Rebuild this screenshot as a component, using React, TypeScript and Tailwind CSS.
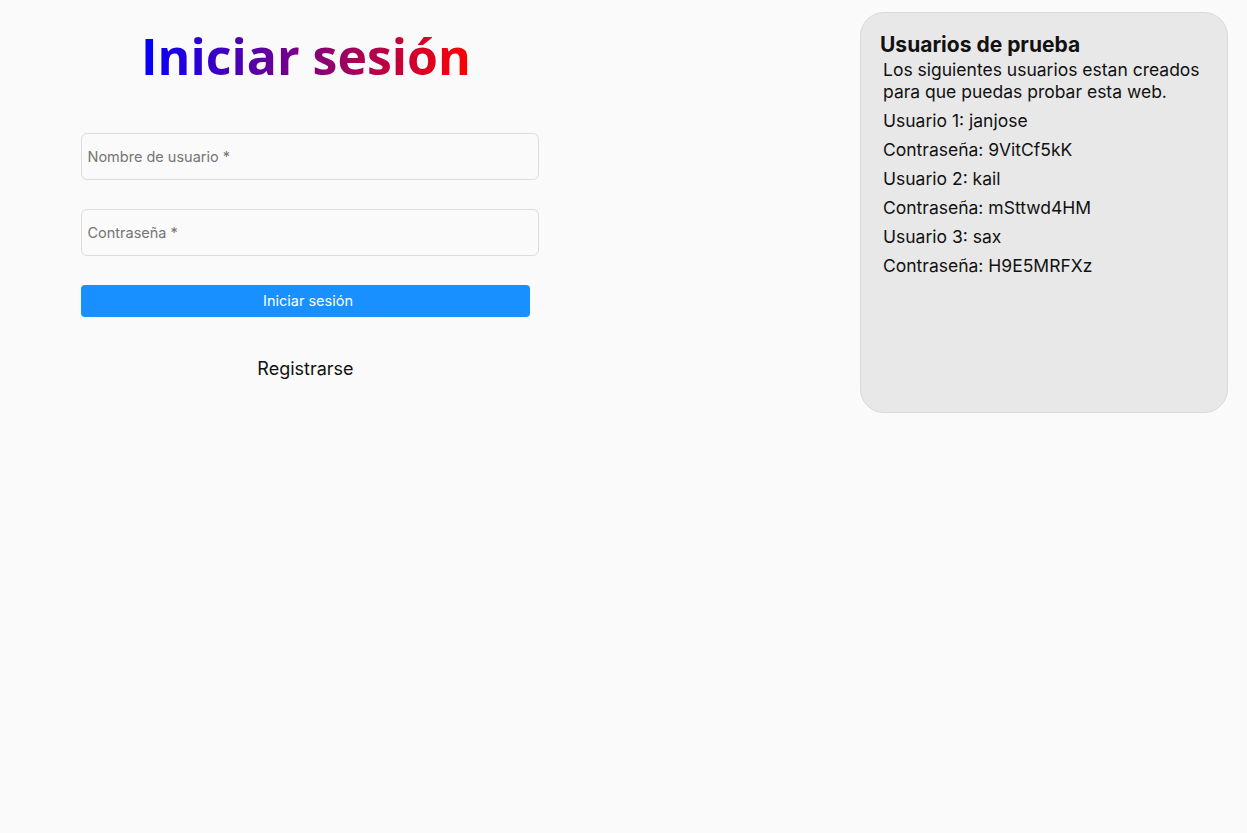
const users = [
  { user: 'janjose', pass: '9VitCf5kK' },
  { user: 'kail', pass: 'mSttwd4HM' },
  { user: 'sax', pass: 'H9E5MRFXz' },
];

function LoginForm() {
  return (
    <div className="w-[612px] flex flex-col items-center">
      <h1
        className="mt-[24px] text-[50px] leading-[64px] font-bold bg-[linear-gradient(to_right,#0000ff,#ff0000)] bg-clip-text text-transparent"
        style={{ fontFamily: '"Open Sans", "Noto Sans", sans-serif' }}
      >
        Iniciar sesión
      </h1>
      <form className="mt-[45px] w-[458px] flex flex-col ml-[7px]">
        <input
          type="text"
          placeholder="Nombre de usuario *"
          className="h-[47px] w-full rounded-[6px] border border-[#dcdcdc] bg-[#fafafa] px-[6px] text-[14.5px] text-[#333] placeholder:text-[#757575] outline-none"
        />
        <input
          type="password"
          placeholder="Contraseña *"
          className="mt-[29px] h-[47px] w-full rounded-[6px] border border-[#dcdcdc] bg-[#fafafa] px-[6px] text-[14.5px] text-[#333] placeholder:text-[#757575] outline-none"
        />
        <button
          type="button"
          className="mt-[29px] h-[32px] w-[449px] rounded-[4px] bg-[#1890ff] pl-[6px] text-[14.5px] text-white"
        >
          Iniciar sesión
        </button>
        <a className="mt-[38px] self-center -ml-[8px] text-[18px] text-[#111] cursor-pointer">
          Registrarse
        </a>
      </form>
    </div>
  );
}

function TestUsers() {
  return (
    <aside className="mt-[12px] w-[368px] h-[401px] rounded-[24px] border border-[#dadada] bg-[#e8e8e8] pt-[20px] pl-[19px] pr-[12px] text-[#111]">
      <h2 className="text-[21px] leading-[24px] font-bold">Usuarios de prueba</h2>
      <div className="pl-[3px] pt-[2px] text-[17.5px]">
        <p className="leading-[22px]">
          Los siguientes usuarios estan creados para que puedas probar esta web.
        </p>
        {users.map((u, i) => (
          <div key={u.user}>
            <p className="mt-[7px] leading-[22px]">Usuario {i + 1}: {u.user}</p>
            <p className="mt-[7px] leading-[22px]">Contraseña: {u.pass}</p>
          </div>
        ))}
      </div>
    </aside>
  );
}

export default function App() {
  return (
    <div
      className="min-h-screen w-full bg-[#fafafa] flex"
      style={{ fontFamily: 'Inter, "Noto Sans", sans-serif' }}
    >
      <LoginForm />
      <div className="flex-1" />
      <TestUsers />
      <div className="w-[19px]" />
    </div>
  );
}
